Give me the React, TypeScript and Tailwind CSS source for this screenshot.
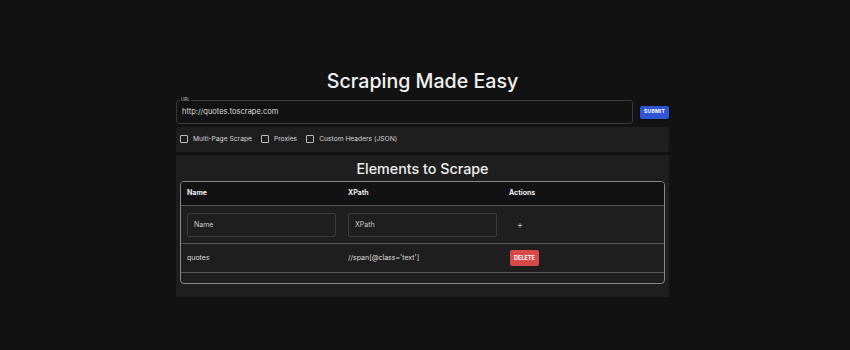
import { useState } from 'react'

const font = { fontFamily: 'Inter, "Liberation Sans", sans-serif' }

export default function App() {
  const [url, setUrl] = useState('http://quotes.toscrape.com')
  const rows = [{ name: 'quotes', xpath: "//span[@class='text']" }]

  return (
    <div className="w-full h-[350px] bg-[#121212] text-white flex flex-col items-center pr-[5px]" style={font}>
      <h1 className="mt-[68px] text-[19.6px] leading-[26px] font-medium text-[#f2f2f2]">Scraping Made Easy</h1>
      <div className="w-[493px] mt-[6px] flex items-center gap-[7px]">
        <div className="relative flex-1 h-[24px] border border-[#3a3a3a] rounded-[3px] flex items-center px-[5px]">
          <span className="absolute -top-[4px] left-[3px] px-[1px] bg-[#121212] text-[4.5px] leading-[6px] text-[#bbb]">URL</span>
          <input
            value={url}
            onChange={(e) => setUrl(e.target.value)}
            className="w-full bg-transparent outline-none text-[7.5px] text-[#ddd]"
          />
        </div>
        <button className="w-[29px] h-[13px] rounded-[2px] bg-[#3056d3] text-[5px] font-bold text-white tracking-[0.2px] shadow-[0_1px_2px_rgba(0,0,0,0.5)]">
          SUBMIT
        </button>
      </div>
      <div className="w-[493px] mt-[3px] h-[25px] bg-[#1e1e1e] rounded-[2px] flex items-center px-[4px] gap-[9px] text-[6.7px] text-[#d6d6d6]">
        {['Multi-Page Scrape', 'Proxies', 'Custom Headers (JSON)'].map((label) => (
          <label key={label} className="flex items-center gap-[5px]">
            <span className="w-[8px] h-[8px] border border-[#bbb] rounded-[1px]" />
            {label}
          </label>
        ))}
      </div>
      <div className="w-[493px] mt-[3px] h-[142px] bg-[#1e1e1e] rounded-[2px] px-[4px] pt-[4px]">
        <h2 className="text-center text-[14.3px] leading-[20px] font-medium text-[#eee]">Elements to Scrape</h2>
        <div className="mt-[2px] border border-[#888] rounded-[4px] overflow-hidden">
          <div className="grid grid-cols-3 h-[24px] items-center bg-[#121212] border-b border-[#555] text-[7px] font-bold text-[#eee]">
            <div className="pl-[6px]">Name</div>
            <div className="pl-[6px]">XPath</div>
            <div className="pl-[6px]">Actions</div>
          </div>
          <div className="grid grid-cols-3 h-[38px] items-center border-b border-[#555] text-[7px]">
            <div className="px-[6px]">
              <input placeholder="Name" className="w-full h-[24px] border border-[#3c3c3c] rounded-[2px] bg-transparent px-[6px] outline-none placeholder:text-[#ccc]" />
            </div>
            <div className="px-[6px]">
              <input placeholder="XPath" className="w-full h-[24px] border border-[#3c3c3c] rounded-[2px] bg-transparent px-[6px] outline-none placeholder:text-[#ccc]" />
            </div>
            <div className="pl-[14px] text-[9px] text-[#ccc]">+</div>
          </div>
          {rows.map((r) => (
            <div key={r.name} className="grid grid-cols-3 h-[29px] items-center border-b border-[#555] text-[7px] text-[#ddd]">
              <div className="pl-[6px]">{r.name}</div>
              <div className="pl-[6px]">{r.xpath}</div>
              <div className="pl-[7px]">
                <button className="w-[29px] h-[16px] rounded-[2px] bg-[#d9484b] text-[5.5px] font-bold text-white">DELETE</button>
              </div>
            </div>
          ))}
          <div className="h-[10px]" />
        </div>
      </div>
    </div>
  )
}
